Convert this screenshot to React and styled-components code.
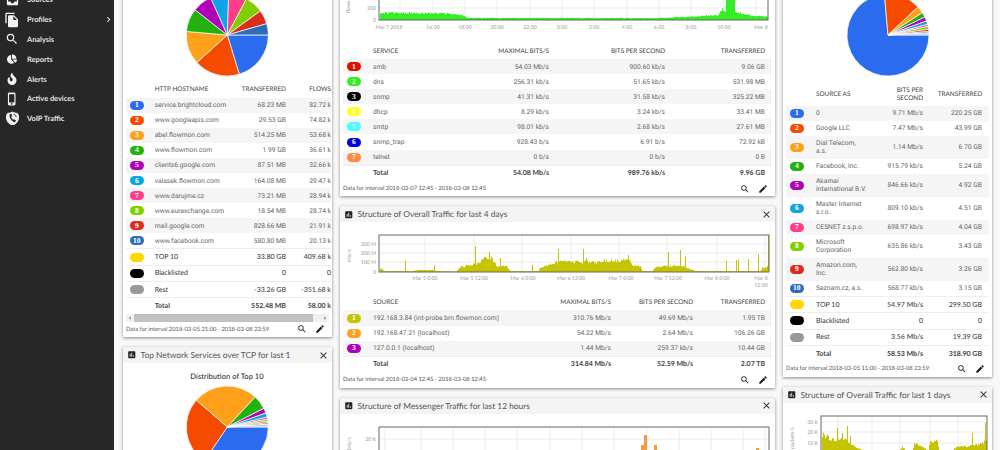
import React from 'react';
import styled, { createGlobalStyle } from 'styled-components';
import { MdSearch, MdEdit, MdClose, MdInsertChart, MdInbox, MdFileCopy, MdPhoneIphone, MdChevronRight, MdArrowLeft, MdArrowRight } from 'react-icons/md';
import { FaChartPie, FaFire } from 'react-icons/fa';

const COLORS = ['#2b6cee', '#f44b00', '#ff9f1a', '#22b20e', '#b000b8', '#0ea5e8', '#ff3d8b', '#7fd000', '#dd2b1c', '#2f6cb8'];

const GlobalStyle = createGlobalStyle`
	html, body {
		margin: 0;
		padding: 0;
		height: 450px;
		overflow: hidden;
		background: #f8f8f8;
		font-family: "Lato", sans-serif;
		text-rendering: geometricPrecision;
	}
`

const Page = styled.div`
	display: flex;
	width: 1000px;
	height: 450px;
	overflow: hidden;
`

const Sidebar = styled.nav`
	width: 114px;
	flex-shrink: 0;
	background: #272727;
`

const SideList = styled.ul`
	list-style: none;
	margin: -10px 0 0;
	padding: 0;
`

const SideItem = styled.li`
	display: flex;
	align-items: center;
	height: 19.8px;
	color: #e4e4e4;
	font-size: 7.4px;
	font-weight: 700;
	svg {
		flex-shrink: 0;
	}
`

const SideIcon = styled.span`
	display: flex;
	justify-content: center;
	width: 27px;
	padding-right: 3px;
	box-sizing: border-box;
	color: #f4f4f4;
`

const SideArrow = styled.span`
	margin-left: auto;
	display: flex;
`

const Main = styled.main`
	display: flex;
	align-items: flex-start;
	gap: 8px;
	padding-left: 9px;
`

const Column = styled.div`
	display: flex;
	flex-direction: column;
	gap: 10px;
	flex-shrink: 0;
	width: ${props => props.$width}px;
	margin-top: -20px;
`

const Card = styled.section`
	flex-shrink: 0;
	background: #fff;
	box-shadow: 0 1px 3px rgba(0, 0, 0, .45);
`

const CardHead = styled.header`
	display: flex;
	align-items: center;
	height: 16px;
	padding: 0 3px 0 4px;
	background: #f4f4f4;
	color: #555;
	font-size: 8.4px;
	svg:first-child {
		color: #222;
		margin-right: 4px;
	}
`

const CloseIcon = styled(MdClose)`
	margin-left: auto;
	color: #333;
`

const ChartSvg = styled.svg`
	display: block;
	font-family: "Lato", sans-serif;
`

const Rows = styled.div`
	padding: 0 3px;
	overflow: hidden;
`

const Row = styled.div`
	display: grid;
	grid-template-columns: ${props => props.$cols};
	align-items: center;
	min-height: ${props => props.$tall ? 23 : 15.1}px;
	width: ${props => props.$rowWidth ? `${props.$rowWidth}px` : 'auto'};
	color: #666;
	font-family: "Roboto", sans-serif;
	font-size: 6.7px;
	line-height: 8px;
	&:nth-child(odd) {
		background: #f5f5f5;
	}
`

const HeadRow = styled(Row)`
	min-height: ${props => props.$height}px;
	color: #444;
	font-family: "Lato", sans-serif;
	font-size: 6.4px;
	text-transform: uppercase;
	&:nth-child(odd) {
		background: transparent;
	}
`

const SumRow = styled(Row)`
	min-height: 16.3px;
	border-top: 1px solid #eee;
	box-sizing: border-box;
	color: #444;
	font-family: "Lato", sans-serif;
	font-size: 7px;
	font-weight: ${props => props.$strong ? 700 : 500};
	&:nth-child(odd) {
		background: transparent;
	}
`

const Cell = styled.div`
	text-align: ${props => props.$right ? 'right' : 'left'};
	white-space: ${props => props.$multiline ? 'normal' : 'nowrap'};
`

const Swatch = styled.span`
	display: flex;
	align-items: center;
	justify-content: center;
	width: 14.5px;
	height: 9px;
	margin-left: 3.5px;
	border-radius: 4.5px;
	background: ${props => props.$color};
	color: #fff;
	font-family: "Liberation Serif", serif;
	font-size: 7.5px;
	font-weight: 700;
`

const ScrollTrack = styled.div`
	display: flex;
	align-items: center;
	height: 8px;
	margin: 0 3px;
	background: #f1f1f1;
	color: #777;
	svg:last-child {
		margin-left: auto;
	}
`

const ScrollThumb = styled.div`
	width: 179px;
	height: 8px;
	background: #c1c1c1;
`

const CardFoot = styled.footer`
	display: flex;
	align-items: center;
	height: 15.5px;
	padding: 0 7px 0 3px;
	color: #555;
	font-size: 5.8px;
	white-space: nowrap;
`

const FootTools = styled.div`
	margin-left: auto;
	display: flex;
	gap: 8px;
	color: #222;
`

const AxisText = styled.text`
	fill: #999;
	font-size: 5.2px;
`

const PieTitle = styled.text`
	fill: #333;
	font-size: 7.6px;
	font-weight: 500;
`

// tiny seeded random, so the charts stay the same on every load
const seeded = seed => () => {
	seed = (seed * 16807) % 2147483647;
	return seed / 2147483647;
};

const slicePath = (cx, cy, r, from, to) => {
	const rad = a => (a * Math.PI) / 180;
	const x1 = cx + r * Math.cos(rad(from));
	const y1 = cy + r * Math.sin(rad(from));
	const x2 = cx + r * Math.cos(rad(to));
	const y2 = cy + r * Math.sin(rad(to));
	const large = to - from > 180 ? 1 : 0;
	return `M${cx} ${cy}L${x1} ${y1}A${r} ${r} 0 ${large} 1 ${x2} ${y2}Z`;
};

const Pie = ({ cx, cy, stops }) => (
	<g stroke="#fff" strokeWidth=".7">
		{stops.map((to, i) => (
			<path
				key={i}
				d={slicePath(cx, cy, 41, i === 0 ? 0 : stops[i - 1], to)}
				fill={i < COLORS.length ? COLORS[i] : '#c9c9e8'}
			/>
		))}
	</g>
);

// envelope is a list of [x, height], spikes of [x, height] go on top
const areaPath = (from, to, base, envelope, spikes, seed, noise = .2) => {
	const rnd = seeded(seed);
	let d = `M${from} ${base}`;
	for (let x = from; x <= to; x += 1) {
		let k = 0;
		while (k < envelope.length - 2 && envelope[k + 1][0] < x) k++;
		const [x0, h0] = envelope[k];
		const [x1, h1] = envelope[k + 1];
		const t = Math.min(1, Math.max(0, (x - x0) / (x1 - x0)));
		let h = h0 + (h1 - h0) * t;
		h = h * (1 - noise + rnd() * noise * 1.6);
		spikes.forEach(s => {
			if (Math.abs(s[0] - x) < 1) h = Math.max(h, s[1]);
		});
		d += `L${x} ${base - h}L${x + 1} ${base - h}`;
	}
	return `${d}L${to + 1} ${base}Z`;
};

const Frame = ({ x, y, w, h }) => (
	<rect x={x} y={y} width={w} height={h} fill="none" stroke="#666" strokeWidth="1" />
);

const Grid = ({ xs, ys, top, bottom, left, right }) => (
	<g stroke="#e2e2e2" strokeWidth=".7">
		{xs.map(x => <line key={x} x1={x} x2={x} y1={top} y2={bottom} />)}
		{ys.map(y => <line key={y} x1={left} x2={right} y1={y} y2={y} />)}
	</g>
);

const FlowsChart = () => {
	const labels = [[389, 'Mar 7 2018'], [433, '16:00'], [465, '18:00'], [497, '20:00'], [530, '22:00'], [562, '0:00'], [594, '2:00'], [627, '4:00'], [659, '6:00'], [691, '8:00'], [724, '10:00'], [761, 'Mar 8']];
	const green = areaPath(380, 767, 20, [[380, 7.5], [440, 7], [462, 5], [467, 2.2], [660, 2], [690, 3.5], [718, 5], [722, 12], [725, 8], [727, 40], [733, 40], [735, 8], [745, 6], [752, 4], [767, 4]], [], 77, .15);
	return (
		<ChartSvg width="435" height="64" viewBox="340 -20 435 64">
			<Grid xs={[400, 433, 465, 497, 530, 562, 594, 627, 659, 691, 724, 756]} ys={[8]} top={-20} bottom={20} left={379} right={768} />
			<path d={green} fill="#33ee22" />
			<Frame x={379} y={-30} w={389} h={50} />
			<AxisText x="376" y="10" textAnchor="end">200</AxisText>
			<AxisText x="376" y="22" textAnchor="end">0</AxisText>
			{labels.map(([x, t]) => <AxisText key={t} x={x} y="29" textAnchor="middle">{t}</AxisText>)}
			<AxisText x="350" y="13" transform="rotate(-90 350 13)">flows/s</AxisText>
		</ChartSvg>
	);
};

const OverallChart = () => {
	const labels = [[425, 'Mar 5 0:00'], [474, 'Mar 5 12:00'], [523, 'Mar 6 0:00'], [571, 'Mar 6 12:00'], [621, 'Mar 7 0:00'], [668, 'Mar 7 12:00'], [717, 'Mar 8 0:00']];
	const yellow = areaPath(380, 768, 273, [[380, 4], [384, 1], [404, 1], [412, 1], [418, 2], [432, 2], [436, 1], [456, .5], [460, 5], [478, 9], [482, 14], [492, 15], [496, 6], [506, 6], [510, 1], [538, 1], [540, 5], [552, 8], [556, 11], [595, 10], [600, 10], [602, 12], [630, 12], [632, 7], [640, 6], [642, 1], [652, 1], [655, 5], [680, 7], [690, 3], [695, 1], [760, 1], [762, 4], [768, 6]],
		[[405, 11], [434, 7], [475, 26], [489, 20], [500, 14], [532, 7], [558, 23], [583, 23], [586, 14], [628, 17], [668, 20], [680, 22], [685, 16], [726, 11], [736, 12], [738, 12], [748, 13], [758, 18], [768, 36]], 311);
	return (
		<ChartSvg width="435" height="73" viewBox="340 223 435 73">
			<Grid xs={[425, 474, 522, 571, 619, 667, 717, 765]} ys={[245, 254, 263]} top={236} bottom={273} left={379} right={769} />
			<path d={yellow} fill="#c4c400" />
			<Frame x={379} y={236} w={390} h={37} />
			<AxisText x="376" y="247" textAnchor="end">300 M</AxisText>
			<AxisText x="376" y="256" textAnchor="end">200 M</AxisText>
			<AxisText x="376" y="265" textAnchor="end">100 M</AxisText>
			<AxisText x="376" y="275" textAnchor="end">0</AxisText>
			{labels.map(([x, t]) => <AxisText key={t} x={x} y="281" textAnchor="middle">{t}</AxisText>)}
			<AxisText x="761" y="281" textAnchor="middle">Mar 8</AxisText>
			<AxisText x="761" y="287.5" textAnchor="middle">12:00</AxisText>
			<AxisText x="351" y="263" transform="rotate(-90 351 263)">bits/s</AxisText>
		</ChartSvg>
	);
};

const MessengerChart = () => (
	<ChartSvg width="435" height="40" viewBox="340 414 435 40">
		<Grid xs={[385, 421, 453, 485, 517, 550, 582, 614, 647, 679, 711, 743, 765]} ys={[439]} top={427} bottom={460} left={379} right={769} />
		<path d="M641 450V445H644V435H647V450ZM654 450V445H657V450ZM756 450V448H759V450Z" fill="#f79a3e" />
		<path d="M379 450V427H769V450" fill="none" stroke="#666" strokeWidth="1" />
		<AxisText x="376" y="441" textAnchor="end">30 K</AxisText>
		<AxisText x="351" y="450" transform="rotate(-90 351 450)">bits/s</AxisText>
	</ChartSvg>
);

const PacketsChart = () => {
	const yellow = areaPath(822, 986, 451, [[822, 20], [830, 15], [845, 13], [855, 6], [868, 1], [898, 1], [902, 6], [906, 2], [912, 2], [914, 10], [928, 3], [930, 12], [937, 12], [939, 2], [950, 1], [956, 6], [975, 8], [986, 12]],
		[[837, 25], [842, 20], [847, 27], [850, 17], [972, 20], [985, 30]], 59);
	return (
		<ChartSvg width="209" height="60" viewBox="783 401 209 60">
			<Grid xs={[838, 872, 900, 930, 958]} ys={[420, 430, 441]} top={414} bottom={451} left={821} right={987} />
			<path d={yellow} fill="#c4c400" />
			<Frame x={821} y={414} w={166} h={60} />
			<AxisText x="818" y="422" textAnchor="end">30 K</AxisText>
			<AxisText x="818" y="432" textAnchor="end">20 K</AxisText>
			<AxisText x="818" y="443" textAnchor="end">10 K</AxisText>
			<AxisText x="794" y="447" transform="rotate(-90 794 447)">packets/s</AxisText>
		</ChartSvg>
	);
};

const VoipIcon = () => (
	<svg width="15" height="15" viewBox="0 0 16 16">
		<path d="M8 .5l2.4 1.2 3 .3 1.4 2.6.2 3.4-1.5 3.6L10 15H6l-3.5-3.4L1 8l.2-3.4L2.6 2l3-.3z" fill="#eee" />
		<path d="M5 3.5c-.8 3.5 1.8 7.5 5.5 8.5l1.3-2-2.2-1.3-1 .7C7.5 8.5 6.8 7.3 6.6 6.2l1-.8L6.8 3z" fill="#272727" />
		<path d="M9 3.5c1.5.3 2.7 1.5 3 3" fill="none" stroke="#272727" strokeWidth="1" />
	</svg>
);

const menu = [
	{ label: 'Sources', icon: <MdInbox size={15} /> },
	{ label: 'Profiles', icon: <MdFileCopy size={16} />, more: true },
	{ label: 'Analysis', icon: <MdSearch size={14} /> },
	{ label: 'Reports', icon: <FaChartPie size={10} /> },
	{ label: 'Alerts', icon: <FaFire size={12} /> },
	{ label: 'Active devices', icon: <MdPhoneIphone size={14} /> },
	{ label: 'VoIP Traffic', icon: <VoipIcon /> },
];

const hostRows = [
	['service.brightcloud.com', '68.23 MB', '82.72 k'],
	['www.googleapis.com', '29.53 GB', '74.82 k'],
	['abel.flowmon.com', '514.25 MB', '53.68 k'],
	['www.flowmon.com', '1.99 GB', '36.61 k'],
	['clients6.google.com', '87.51 MB', '32.66 k'],
	['valasek.flowmon.com', '164.08 MB', '29.47 k'],
	['www.darujme.cz', '73.21 MB', '28.94 k'],
	['www.eurexchange.com', '18.54 MB', '28.74 k'],
	['mail.google.com', '828.66 MB', '21.91 k'],
	['www.facebook.com', '580.80 MB', '20.13 k'],
];

const serviceRows = [
	['smb', '54.03 Mb/s', '900.60 kb/s', '9.06 GB'],
	['dns', '256.31 kb/s', '51.65 kb/s', '531.98 MB'],
	['snmp', '41.31 kb/s', '31.58 kb/s', '325.22 MB'],
	['dhcp', '8.29 kb/s', '3.24 kb/s', '33.41 MB'],
	['smtp', '98.01 kb/s', '2.68 kb/s', '27.61 MB'],
	['snmp_trap', '928.43  b/s', '6.91  b/s', '72.92 kB'],
	['telnet', '0 b/s', '0 b/s', '0 B'],
];
const serviceColors = ['#e01000', '#33ee22', '#000', '#ffff22', '#44ffff', '#0000dd', '#ff8844'];

const sourceRows = [
	['192.168.3.84 (int-probe.brn.flowmon.com)', '310.76 Mb/s', '49.69 Mb/s', '1.95 TB'],
	['192.168.47.21 (localhost)', '54.22 Mb/s', '2.64 Mb/s', '106.26 GB'],
	['127.0.0.1 (localhost)', '1.44 Mb/s', '259.37 kb/s', '10.44 GB'],
];
const sourceColors = ['#c4c400', '#ff9f1a', '#b000b8'];

const asRows = [
	['0', '9.71 Mb/s', '220.25 GB'],
	['Google LLC', '7.47 Mb/s', '43.99 GB'],
	['Dial Telecom, a.s.', '1.14 Mb/s', '6.70 GB', true],
	['Facebook, Inc.', '915.79 kb/s', '5.24 GB'],
	['Akamai International B.V.', '846.66 kb/s', '4.92 GB', true],
	['Master Internet s.r.o.', '809.10 kb/s', '4.51 GB', true],
	['CESNET z.s.p.o.', '698.97 kb/s', '4.04 GB'],
	['Microsoft Corporation', '635.86 kb/s', '3.43 GB', true],
	['Amazon.com, Inc.', '562.80 kb/s', '3.26 GB', true],
	['Seznam.cz, a.s.', '568.77 kb/s', '3.15 GB'],
];

const summaryColors = { 'TOP 10': '#ffd600', Blacklisted: '#000', Rest: '#999' };

const Head = ({ title }) => (
	<CardHead>
		<MdInsertChart size={9.5} />
		{title}
		<CloseIcon size={11} />
	</CardHead>
);

const Foot = ({ text }) => (
	<CardFoot>
		Data for interval {text}
		<FootTools>
			<MdSearch size={10} />
			<MdEdit size={10} />
		</FootTools>
	</CardFoot>
);

const Table = ({ cols, head, headHeight = 15, rows, colors, summary, rowWidth }) => (
	<Rows>
		<HeadRow $cols={cols} $height={headHeight} $rowWidth={rowWidth}>
			<Cell />
			{head.map((h, i) => <Cell key={i} $right={i > 0}>{h}</Cell>)}
		</HeadRow>
		<div>
			{rows.map((row, i) => {
				const tall = row[row.length - 1] === true;
				const cells = tall ? row.slice(0, -1) : row;
				return (
					<Row key={cells[0]} $cols={cols} $tall={tall} $rowWidth={rowWidth}>
						<Swatch $color={colors[i]}>{i + 1}</Swatch>
						{cells.map((c, k) => <Cell key={k} $right={k > 0} $multiline={k === 0}>{c}</Cell>)}
					</Row>
				);
			})}
		</div>
		<div>
			{summary.map(row => (
				<SumRow key={row[0]} $cols={cols} $rowWidth={rowWidth} $strong={row[0] === 'Total'}>
					{summaryColors[row[0]] ? <Swatch $color={summaryColors[row[0]]} /> : <Cell />}
					{row.map((c, k) => <Cell key={k} $right={k > 0}>{c}</Cell>)}
				</SumRow>
			))}
		</div>
	</Rows>
);

const App = () => (
	<Page>
		<GlobalStyle />
		<Sidebar>
			<SideList>
				{menu.map(item => (
					<SideItem key={item.label}>
						<SideIcon>{item.icon}</SideIcon>
						{item.label}
						{item.more && <SideArrow><MdChevronRight size={11} /></SideArrow>}
					</SideItem>
				))}
			</SideList>
		</Sidebar>
		<Main>
			<Column $width={209}>
				<Card>
					<ChartSvg width="209" height="102" viewBox="123 -20 209 102">
						<Pie cx={227.3} cy={35} stops={[73, 138, 185, 218, 246, 272, 298, 324, 344, 360]} />
					</ChartSvg>
					<Table
						cols="28.7px 85px 46.3px 45px"
						rowWidth={205}
						head={['HTTP Hostname', 'Transferred', 'Flows']}
						headHeight={15.5}
						rows={hostRows}
						colors={COLORS}
						summary={[
							['TOP 10', '33.80 GB', '409.68 k'],
							['Blacklisted', '0', '0'],
							['Rest', '-33.26 GB', '-351.68 k'],
							['Total', '552.48 MB', '58.00 k'],
						]}
					/>
					<ScrollTrack>
						<MdArrowLeft size={8} />
						<ScrollThumb />
						<MdArrowRight size={8} />
					</ScrollTrack>
					<Foot text="2018-03-05 21:00 - 2018-03-08 23:59" />
				</Card>
				<Card>
					<Head title="Top Network Services over TCP for last 1" />
					<ChartSvg width="209" height="110" viewBox="123 363 209 110">
						<PieTitle x="227" y="379" textAnchor="middle">Distribution of Top 10</PieTitle>
						<Pie cx={227.3} cy={427} stops={[124, 221, 313, 333, 340, 346, 349, 352, 354, 356, 360]} />
					</ChartSvg>
				</Card>
			</Column>
			<Column $width={435}>
				<Card>
					<FlowsChart />
					<Table
						cols="30px 60px 116px 116px 100px"
						head={['Service', 'Maximal bits/s', 'Bits per second', 'Transferred']}
						rows={serviceRows}
						colors={serviceColors}
						summary={[['Total', '54.08 Mb/s', '989.76 kb/s', '9.96 GB']]}
					/>
					<Foot text="2018-03-07 12:45 - 2018-03-08 12:45" />
				</Card>
				<Card>
					<Head title="Structure of Overall Traffic for last 4 days" />
					<OverallChart />
					<Table
						cols="30px 150px 88px 82px 72px"
						head={['Source', 'Maximal bits/s', 'Bits per second', 'Transferred']}
						rows={sourceRows}
						colors={sourceColors}
						summary={[['Total', '314.84 Mb/s', '52.59 Mb/s', '2.07 TB']]}
					/>
					<Foot text="2018-03-04 12:45 - 2018-03-08 12:45" />
				</Card>
				<Card>
					<Head title="Structure of Messenger Traffic for last 12 hours" />
					<MessengerChart />
				</Card>
			</Column>
			<Column $width={209}>
				<Card>
					<ChartSvg width="209" height="104" viewBox="783 -20 209 104">
						<Pie cx={888} cy={35} stops={[265, 317, 327, 334, 340, 345, 348, 352, 355, 357, 360]} />
					</ChartSvg>
					<Table
						cols="30px 51px 56px 59px"
						head={['Source AS', <>Bits per<br />second</>, 'Transferred']}
						headHeight={21.5}
						rows={asRows}
						colors={COLORS}
						summary={[
							['TOP 10', '54.97 Mb/s', '299.50 GB'],
							['Blacklisted', '0', '0'],
							['Rest', '3.56 Mb/s', '19.39 GB'],
							['Total', '58.53 Mb/s', '318.90 GB'],
						]}
					/>
					<Foot text="2018-03-05 11:00 - 2018-03-08 23:59" />
				</Card>
				<Card>
					<Head title="Structure of Overall Traffic for last 1 days" />
					<PacketsChart />
				</Card>
			</Column>
		</Main>
	</Page>
);

export default App;
